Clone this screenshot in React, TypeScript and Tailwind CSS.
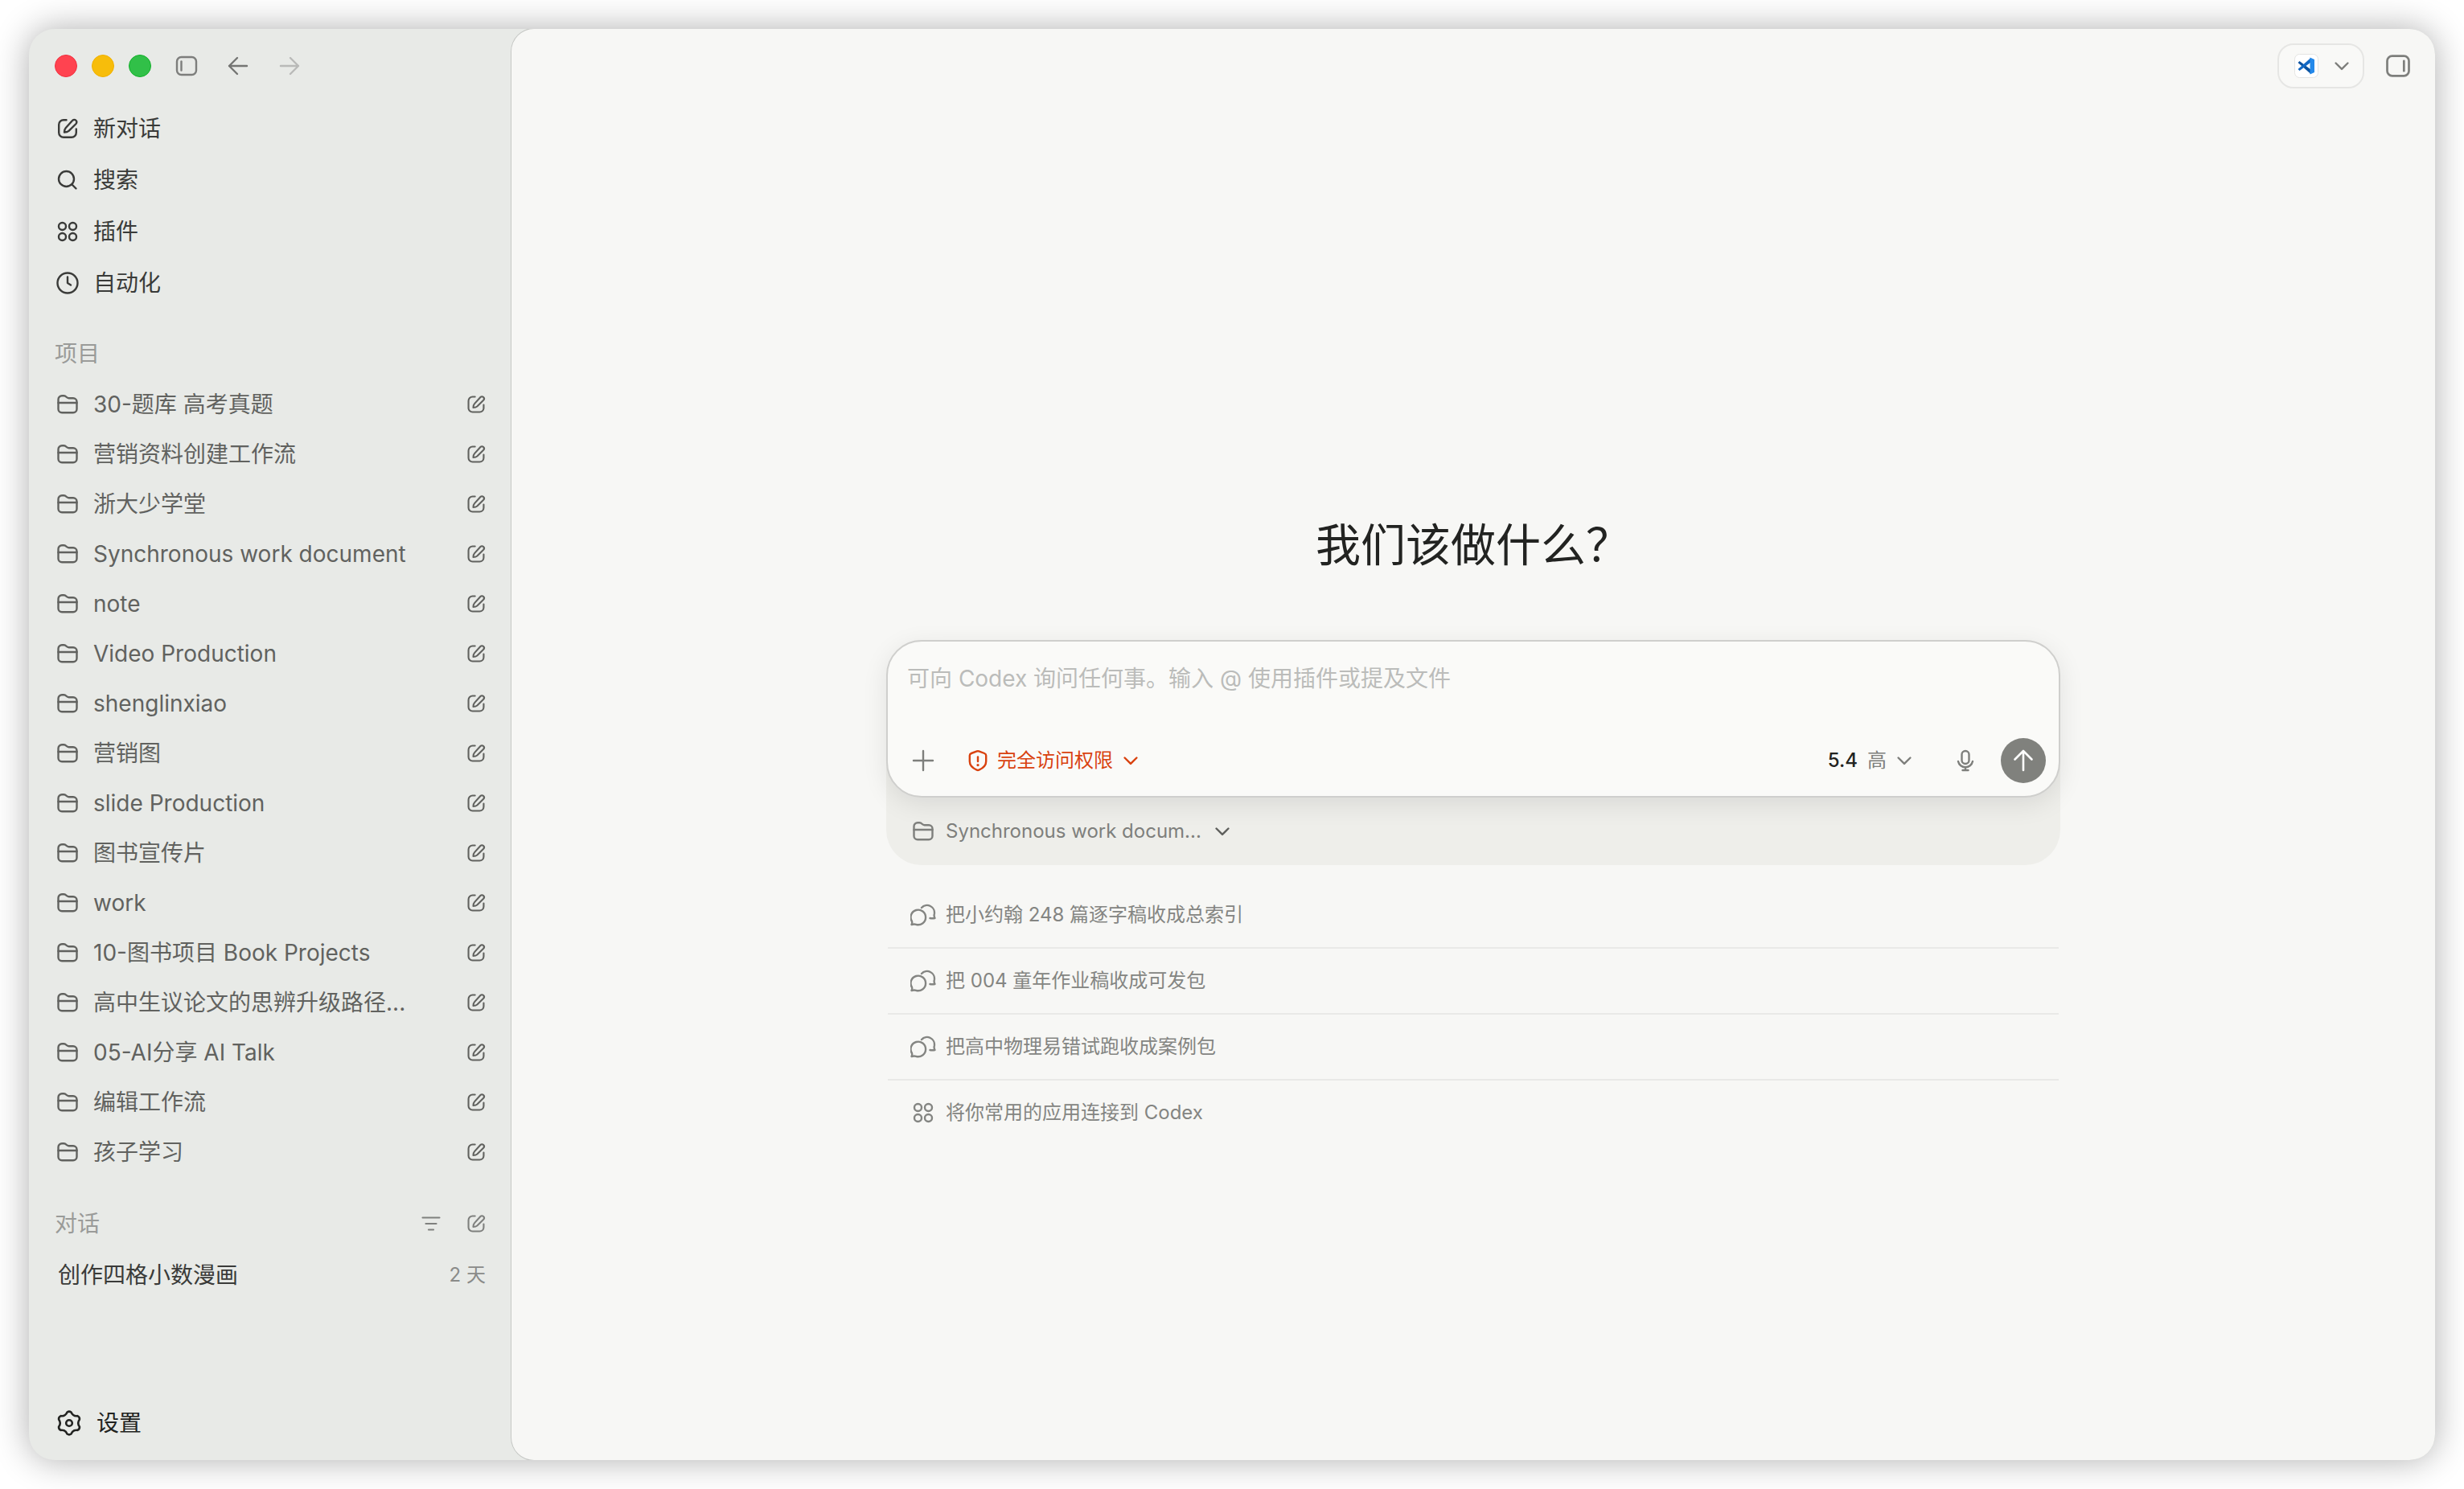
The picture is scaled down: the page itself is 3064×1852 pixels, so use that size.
import type { ReactNode, SVGProps } from "react";

type IconProps = SVGProps<SVGSVGElement>;

function Icon({ children, ...props }: IconProps) {
  return (
    <svg
      width="32"
      height="32"
      viewBox="0 0 32 32"
      fill="none"
      stroke="currentColor"
      strokeWidth="2.4"
      strokeLinecap="round"
      strokeLinejoin="round"
      aria-hidden="true"
      {...props}
    >
      {children}
    </svg>
  );
}

function ComposeIcon(props: IconProps) {
  return (
    <Icon {...props}>
      <path d="M14.5 5.2H11A5.8 5.8 0 0 0 5.200 11v10A5.8 5.8 0 0 0 11 26.800h10A5.8 5.8 0 0 0 26.800 21v-4.500" />
      <path d="M12 20.500c0-2.200.4-4 1.800-5.500l8.400-9.200a3 3 0 0 1 4.300 4.200l-9 8.800c-1.500 1.300-3.300 1.700-5.500 1.700z" />
    </Icon>
  );
}

function SearchIcon(props: IconProps) {
  return (
    <Icon {...props}>
      <circle cx="14.5" cy="14.5" r="9.5" />
      <path d="m21.500 21.500 5 5" />
    </Icon>
  );
}

function AppsIcon(props: IconProps) {
  return (
    <Icon {...props}>
      <circle cx="9.5" cy="9.5" r="4.5" />
      <circle cx="22.5" cy="9.5" r="4.5" />
      <circle cx="9.5" cy="22.5" r="4.5" />
      <circle cx="22.5" cy="22.5" r="4.5" />
    </Icon>
  );
}

function ClockIcon(props: IconProps) {
  return (
    <Icon {...props}>
      <circle cx="16" cy="16" r="12.5" />
      <path d="M16 8.500V16l4 2.500" />
    </Icon>
  );
}

function FolderIcon(props: IconProps) {
  return (
    <Icon {...props}>
      <path d="M4.500 9.800a4.500 4.500 0 0 1 4.500-4.500h2.500c3.200 0 2.800 2.900 6 2.900H23a4.500 4.500 0 0 1 4.500 4.500v9a4.500 4.500 0 0 1-4.500 4.500H9a4.500 4.500 0 0 1-4.500-4.500z" />
      <path d="M4.500 14h23" />
    </Icon>
  );
}

function ChatsIcon(props: IconProps) {
  return (
    <Icon {...props}>
      <path d="M1.500 28c.8-1.200.9-2.500.5-4A9.300 9.300 0 1 1 7 27.800c-1.800-.6-3.500-.4-5.500.2z" />
      <path d="M14 7a9.200 9.200 0 0 1 15.800 8c-.5 1.800-.2 3.200.7 5-2 .3-4 .4-6 0" />
    </Icon>
  );
}

function ChevronIcon() {
  return (
    <Icon className="size-7" strokeWidth="2.8">
      <path d="m7.500 12 8.500 8.500 8.500-8.500" />
    </Icon>
  );
}

function ShieldIcon(props: IconProps) {
  return (
    <Icon {...props}>
      <path d="M14.800 4.400a4 4 0 0 1 2.400 0l7 2.600a3 3 0 0 1 2 2.800V17c0 5-4 8.500-8.800 10.700a3.500 3.500 0 0 1-2.800 0C9.800 25.500 5.800 22 5.800 17V9.800a3 3 0 0 1 2-2.800z" />
      <path d="M16 11.500v5.500" />
      <path d="M16 21.500v.1" strokeWidth="3.2" />
    </Icon>
  );
}

function MicIcon(props: IconProps) {
  return (
    <Icon {...props}>
      <rect x="11.5" y="4" width="9" height="16" rx="4.5" />
      <path d="M7 17a9.200 9.200 0 0 0 18 0M16 24.500v3.500M12.500 28h7" />
    </Icon>
  );
}

function GearIcon(props: IconProps) {
  return (
    <Icon strokeWidth="2.6" {...props}>
      <path d="M18.500 2.500Q20.700 7.800 26.400 7.100Q29.200 8.400 28.900 11.400Q25.500 16 28.900 20.600Q29.200 23.600 26.400 24.900Q20.700 24.200 18.500 29.500Q16 31.200 13.500 29.500Q11.300 24.200 5.600 24.900Q2.800 23.600 3.100 20.600Q6.500 16 3.100 11.400Q2.800 8.400 5.600 7.100Q11.300 7.800 13.500 2.500Q16 .8 18.500 2.500Z" />
      <circle cx="16" cy="16" r="3.8" />
    </Icon>
  );
}

function PanelIcon({ side, ...props }: IconProps & { side: "left" | "right" }) {
  return (
    <Icon {...props}>
      <rect x="4" y="5" width="24" height="22" rx="5.5" />
      <path d={side === "left" ? "M9.500 10.500v11" : "M22.500 10.500v11"} />
    </Icon>
  );
}

function VsCodeLogo() {
  return (
    <svg width="32" height="32" viewBox="0 0 32 32" aria-hidden="true">
      <rect x="1.5" y="1.5" width="29" height="29" rx="6" fill="#fff" stroke="#e4e4e2" />
      <path d="M5.500 12 7.500 10l14 10.500V26z" fill="#0a52a0" />
      <path d="M5.500 20 7.500 22l14-10.500V6z" fill="#1268c4" />
      <path d="M20.500 5.500 26 8v16l-5.500 2.500z" fill="#2489ea" />
    </svg>
  );
}

const NAV_ITEMS = [
  { label: "新对话", icon: <ComposeIcon /> },
  { label: "搜索", icon: <SearchIcon /> },
  { label: "插件", icon: <AppsIcon /> },
  { label: "自动化", icon: <ClockIcon /> },
];

const PROJECTS = [
  "30-题库 高考真题",
  "营销资料创建工作流",
  "浙大少学堂",
  "Synchronous work document",
  "note",
  "Video Production",
  "shenglinxiao",
  "营销图",
  "slide Production",
  "图书宣传片",
  "work",
  "10-图书项目 Book Projects",
  "高中生议论文的思辨升级路径...",
  "05-AI分享 AI Talk",
  "编辑工作流",
  "孩子学习",
];

const SUGGESTIONS = [
  { label: "把小约翰 248 篇逐字稿收成总索引", icon: <ChatsIcon /> },
  { label: "把 004 童年作业稿收成可发包", icon: <ChatsIcon /> },
  { label: "把高中物理易错试跑收成案例包", icon: <ChatsIcon /> },
  { label: "将你常用的应用连接到 Codex", icon: <AppsIcon /> },
];

function NavButton({ icon, children }: { icon: ReactNode; children: ReactNode }) {
  return (
    <button type="button" className="flex h-16 w-full items-center gap-4 text-left">
      {icon}
      {children}
    </button>
  );
}

function Sidebar() {
  return (
    <aside className="flex w-[600px] shrink-0 flex-col pr-[30px] pl-8 text-[#3a3b39]">
      <div className="flex h-[92px] items-center">
        <div className="flex gap-[18px]">
          <button type="button" aria-label="关闭" className="size-7 rounded-full border border-[#f0303f] bg-[#ff4350]" />
          <button type="button" aria-label="最小化" className="size-7 rounded-full border border-[#f0b000] bg-[#f7bd0b]" />
          <button type="button" aria-label="全屏" className="size-7 rounded-full border border-[#12b02a] bg-[#31c048]" />
        </div>
        <button type="button" aria-label="切换侧边栏" className="ml-7 text-[#7d7e7c]">
          <PanelIcon side="left" />
        </button>
        <button type="button" aria-label="后退" className="ml-8 text-[#747573]">
          <Icon>
            <path d="M27 16H5M15 6 5 16l10 10" />
          </Icon>
        </button>
        <button type="button" aria-label="前进" className="ml-8 text-[#b9bab8]">
          <Icon>
            <path d="M5 16h22M17 6l10 10-10 10" />
          </Icon>
        </button>
      </div>

      <nav>
        {NAV_ITEMS.map((item) => (
          <NavButton key={item.label} icon={item.icon}>
            {item.label}
          </NavButton>
        ))}
      </nav>

      <section className="mt-6">
        <h2 className="flex h-16 items-center text-[#9a9b99]">项目</h2>
        <ul className="text-[#61625f]">
          {PROJECTS.map((project) => (
            <li key={project} className="flex h-[62px] items-center justify-between">
              <button type="button" className="flex items-center gap-4 whitespace-nowrap text-left">
                <FolderIcon />
                {project}
              </button>
              <button type="button" aria-label={`在 ${project} 中新建对话`}>
                <ComposeIcon className="size-7" />
              </button>
            </li>
          ))}
        </ul>
      </section>

      <section className="mt-[26px]">
        <div className="flex h-16 items-center gap-7 text-[#7f807e]">
          <h2 className="flex-1 text-[#9a9b99]">对话</h2>
          <button type="button" aria-label="筛选对话">
            <Icon className="size-7">
              <path d="M4 7.500h24M8.500 16h15M12.500 24.500h7" />
            </Icon>
          </button>
          <button type="button" aria-label="新建对话">
            <ComposeIcon className="size-7" />
          </button>
        </div>
        <button type="button" className="flex h-16 w-full items-center justify-between pr-0.5 pl-1">
          <span>创作四格小数漫画</span>
          <span className="text-2xl text-[#8a8b89]">2 天</span>
        </button>
      </section>

      <button type="button" className="mt-auto mb-3.5 flex h-16 items-center gap-[18px] pl-0.5 text-[#222321]">
        <GearIcon />
        设置
      </button>
    </aside>
  );
}

function Composer() {
  return (
    <div className="w-full rounded-[44px] bg-[#eeeeea]">
      <form className="flex h-[196px] flex-col justify-between rounded-[44px] border-2 border-[#cfcfcd] bg-[#fafaf8] shadow-[0_8px_32px_rgba(0,0,0,0.09)]">
        <textarea
          aria-label="消息"
          rows={1}
          placeholder="可向 Codex 询问任何事。输入 @ 使用插件或提及文件"
          className="mt-6 block h-11 w-full resize-none bg-transparent px-6 leading-[44px] outline-none placeholder:text-[#bbbcba]"
        />
        <div className="flex items-center px-4 pb-4 text-2xl text-[#7e7f7c]">
          <button type="button" aria-label="添加" className="ml-3">
            <Icon>
              <path d="M16 4v24M4 16h24" />
            </Icon>
          </button>
          <button type="button" className="ml-9 flex items-center gap-2 text-[#d9420f]">
            <ShieldIcon />
            完全访问权限
            <ChevronIcon />
          </button>
          <button type="button" className="ml-auto flex items-center gap-2">
            <span className="mr-1 font-medium text-[#222321]">5.4</span>
            高
            <ChevronIcon />
          </button>
          <button type="button" aria-label="语音输入" className="ml-[46px]">
            <MicIcon />
          </button>
          <button
            type="submit"
            aria-label="发送"
            className="ml-7 flex size-14 items-center justify-center rounded-full bg-[#80817d] text-white"
          >
            <Icon strokeWidth="2.6">
              <path d="M16 28V4M5.500 14.500 16 4l10.500 10.500" />
            </Icon>
          </button>
        </div>
      </form>
      <button type="button" className="flex h-[84px] items-center gap-3 pl-[30px] text-2xl text-[#7e7f7c]">
        <FolderIcon />
        Synchronous work docum...
        <span className="text-[#5f605d]">
          <ChevronIcon />
        </span>
      </button>
    </div>
  );
}

function Suggestions() {
  return (
    <ul className="mt-[22px] w-full divide-y-2 divide-[#e9e9e7] px-0.5 text-2xl text-[#848582]">
      {SUGGESTIONS.map((item) => (
        <li key={item.label}>
          <button type="button" className="flex h-20 w-full items-center gap-3 pl-7 text-left">
            {item.icon}
            {item.label}
          </button>
        </li>
      ))}
    </ul>
  );
}

export default function App() {
  return (
    <div className="flex h-screen bg-white p-9 font-['Inter','Noto_Sans_CJK_SC',sans-serif] text-[28px] leading-10">
      <div className="flex flex-1 overflow-hidden rounded-[32px] bg-[#e8eae7] shadow-[0_0_44px_rgba(0,0,0,0.32)]">
        <Sidebar />
        <main className="flex min-w-0 flex-1 flex-col rounded-[28px] bg-[#f7f7f5] shadow-[0_0_0_1px_#c6c8c5]">
          <header className="flex h-[92px] items-center justify-end gap-6 pr-7 text-[#7e7f7c]">
            <button
              type="button"
              aria-label="在 VS Code 中打开"
              className="flex h-14 w-[108px] items-center justify-between rounded-[20px] border-2 border-[#e6e6e4] bg-[#f9f9f7] pr-3 pl-[18px]"
            >
              <VsCodeLogo />
              <ChevronIcon />
            </button>
            <button type="button" aria-label="切换右侧面板">
              <PanelIcon side="right" className="size-9" />
            </button>
          </header>
          <div className="mx-auto flex w-full max-w-[1460px] flex-1 flex-col items-center justify-center pt-[120px]">
            <h1 className="mb-20 text-[56px] leading-[76px] text-[#222321]">我们该做什么？</h1>
            <Composer />
            <Suggestions />
          </div>
        </main>
      </div>
    </div>
  );
}
